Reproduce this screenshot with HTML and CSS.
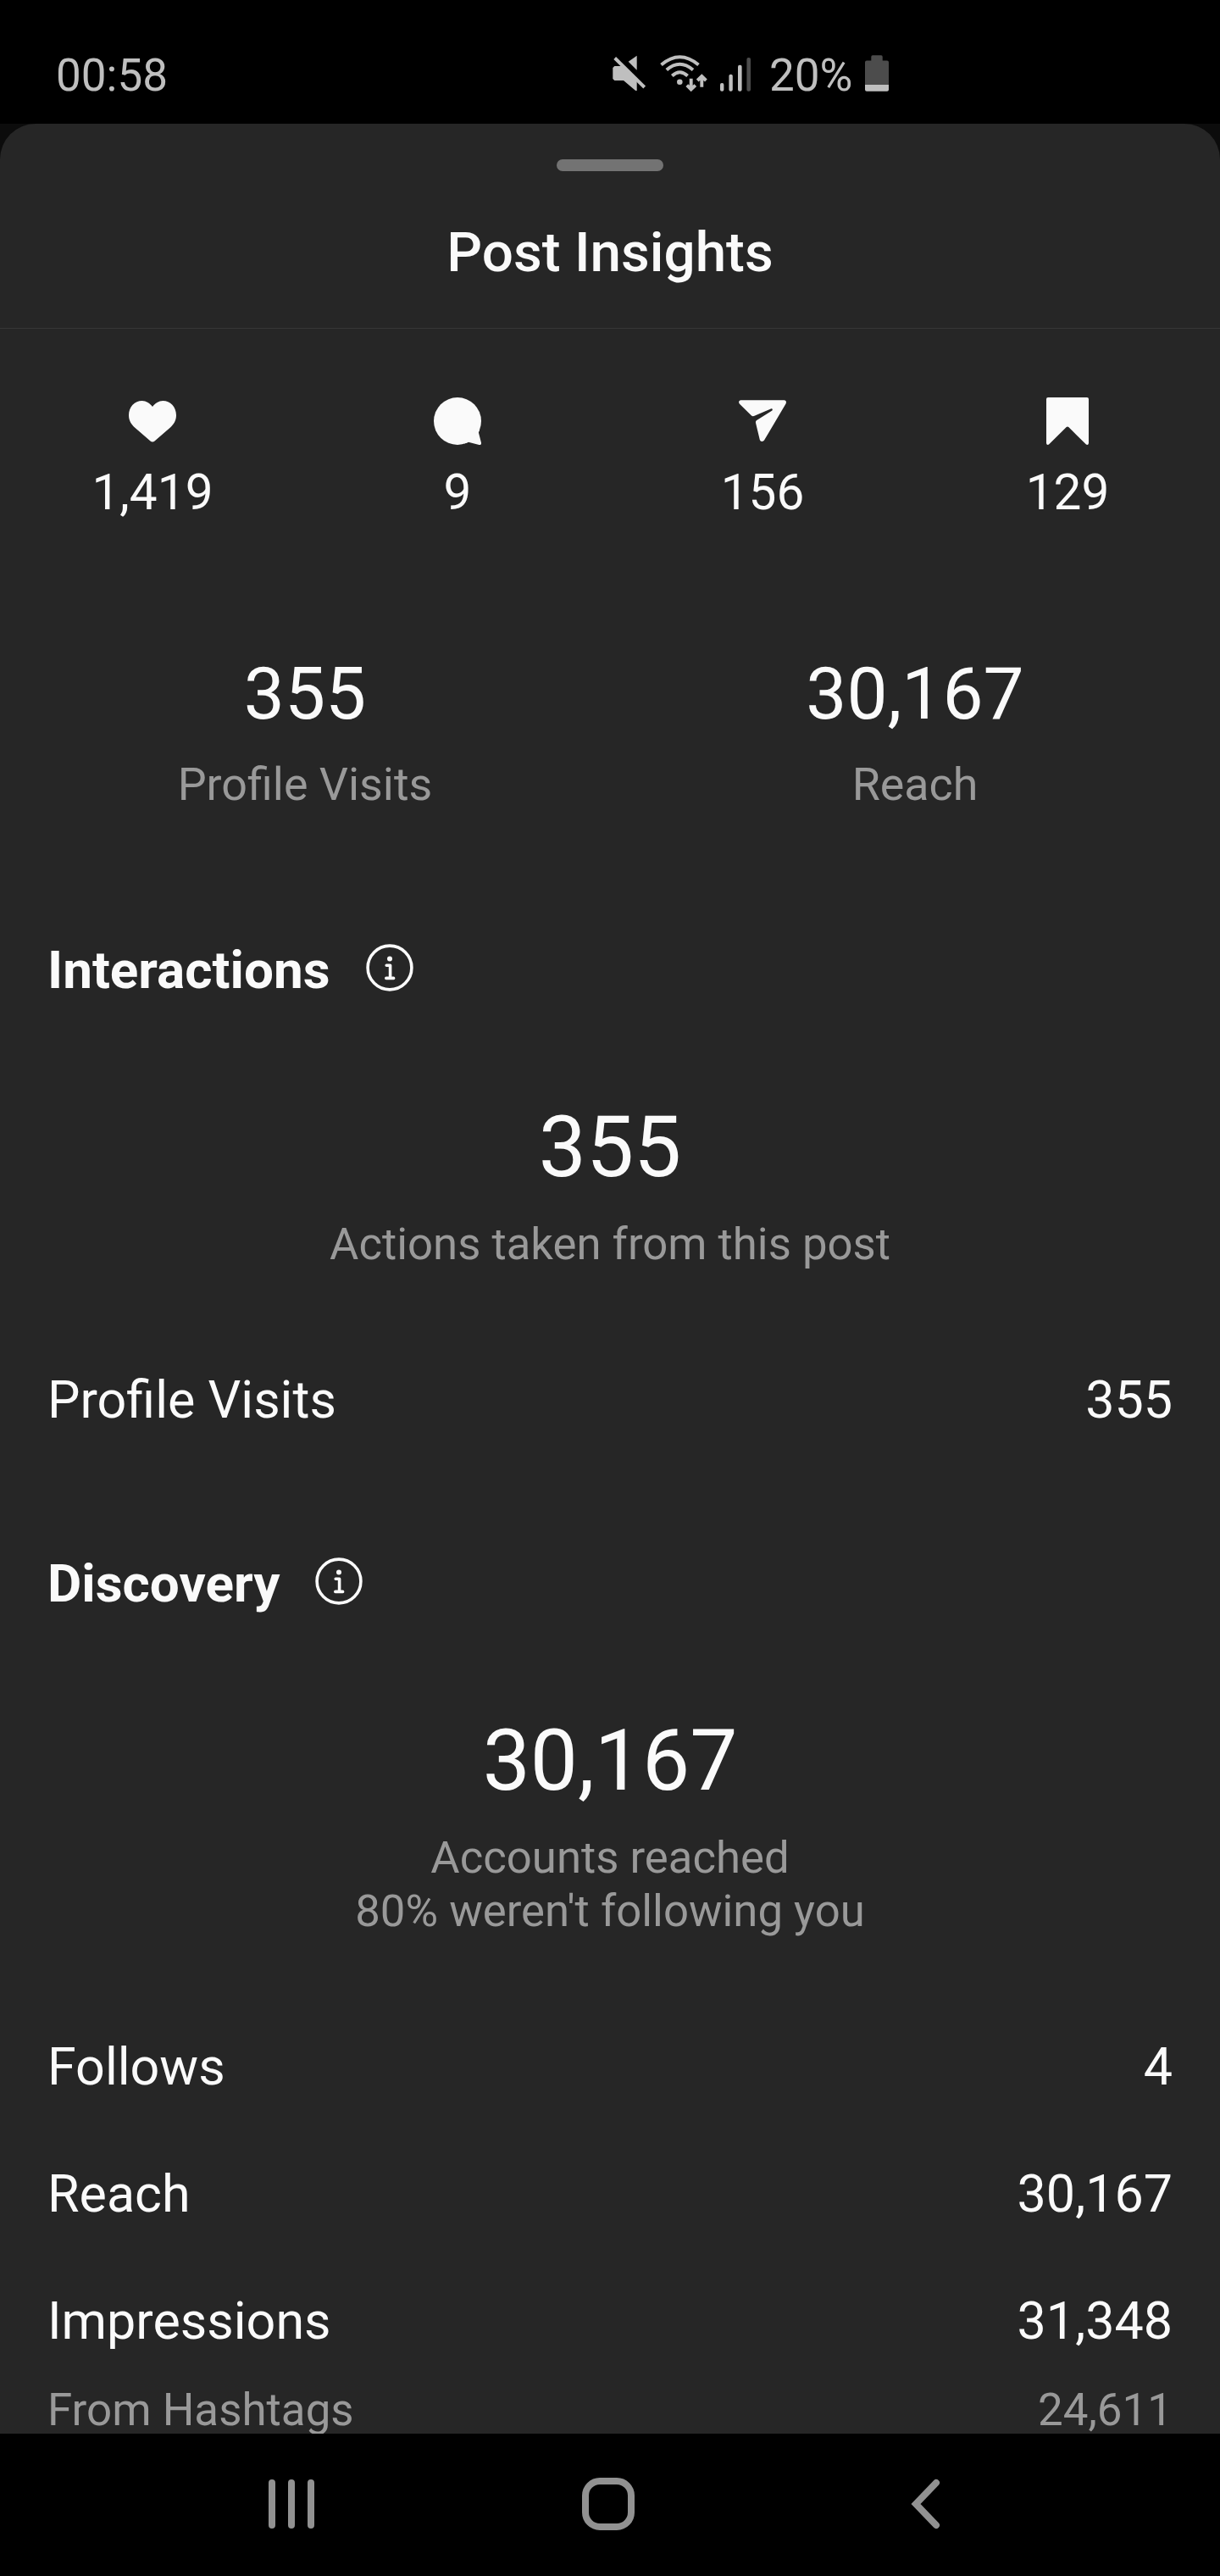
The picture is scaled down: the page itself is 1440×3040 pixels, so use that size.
FILE: index.html
```html
<!DOCTYPE html>
<html lang="en">
<head>
    <meta charset="UTF-8">
    <title>Post Insights</title>
    <link rel="stylesheet" href="styles.css">
</head>
<body>

    <div class="status-bar">
        <span class="time">00:58</span>
        <svg class="mute" width="42" height="44" viewBox="0 0 42 44">
            <path d="M29.7 .7V17.7L19.7 7.7Z"/>
            <path d="M3.3 13H14L29.7 29V42H28.2L14 30H3.3L1.3 28V15Z"/>
            <path class="line" d="M3.7 3.5L38.7 38"/>
        </svg>
        <svg class="wifi" width="58" height="46" viewBox="0 0 58 46">
            <path class="line" d="M2.5 12.5Q24.3 -6 46.5 12.5M8.8 18.5Q24.3 5 40 18.5M15.3 25.5Q24.3 17 33.6 25.5"/>
            <circle cx="24.3" cy="32.7" r="3.3"/>
            <path class="line" d="M37.7 28.7V41M32.8 36.6L37.7 41.5L42.8 36.6M50.3 38.7V26M45.2 31L50.3 26L55.4 31"/>
        </svg>
        <svg class="signal" width="40" height="44" viewBox="0 0 40 44">
            <rect x="2" y="32" width="4.4" height="9.7" rx="2"/>
            <rect x="12.4" y="21.7" width="4.4" height="20" rx="2"/>
            <rect x="23" y="10.7" width="4.6" height="31" rx="2"/>
            <rect class="dim" x="33.4" y="2" width="4.6" height="39.7" rx="2"/>
        </svg>
        <span class="percent">20%</span>
        <svg class="battery" width="28" height="44" viewBox="0 0 28 44">
            <path class="dim" d="M7.3 2Q7.3 .3 9 .3H19Q20.7 .3 20.7 2V6.5H26Q28 6.5 28 8.5V36H0V8.5Q0 6.5 2 6.5H7.3Z"/>
            <path d="M0 35H28V40.7Q28 42.7 26 42.7H2Q0 42.7 0 40.7Z"/>
        </svg>
    </div>

    <div class="backdrop">
        <div class="sheet">
            <div class="sheet-header">
                <div class="handle"></div>
                <h1>Post Insights</h1>
            </div>

            <div class="counts">
                <div class="count">
                    <svg width="56" height="56" viewBox="0 0 56 56"><path d="M28 11C25 7 20.5 4 15.8 4C7 4 0 11 0 21C0 28 3.5 32.3 7 35.5L25.5 51.5Q28 53.5 30.5 51.5L49 35.5C52.5 32.3 56 28 56 21C56 11 49 4 40.2 4C35.5 4 31 7 28 11Z"/></svg>
                    <span>1,419</span>
                </div>
                <div class="count">
                    <svg width="56" height="56" viewBox="0 0 56 56"><circle cx="28" cy="28" r="28"/><path d="M54 38L52.9 41.5L56 53.5Q56.3 56.5 53.5 56L41 52.8L36 54.5L30 40Z"/></svg>
                    <span>9</span>
                </div>
                <div class="count">
                    <svg width="56" height="56" viewBox="0 0 56 56"><path d="M2.5 3.3H53.5C56 3.3 56.5 5.5 55.5 7.5L30.2 50.3C28.8 52.6 25.5 52.6 24.8 50L20 30C19.8 28.6 20.2 27.6 21.5 26.8L39 15.8C40.6 14.6 39.6 12.8 37.8 13.4L18.5 21.8C17 22.5 16 22.3 15 21.5L1 7.8C-.6 6 0 3.3 2.5 3.3Z"/></svg>
                    <span>156</span>
                </div>
                <div class="count">
                    <svg width="56" height="56" viewBox="0 0 56 56"><path d="M5 0H51Q53 0 53 2V54Q52.6 56.6 50 55.6L29.3 35Q28 33.8 26.7 35L6 55.6Q3.4 56.6 3 54V2Q3 0 5 0Z"/></svg>
                    <span>129</span>
                </div>
            </div>

            <div class="stats">
                <div>
                    <div class="stat-value">355</div>
                    <div class="label">Profile Visits</div>
                </div>
                <div>
                    <div class="stat-value">30,167</div>
                    <div class="label">Reach</div>
                </div>
            </div>

            <div class="section interactions">
                <h2>Interactions
                    <svg class="info" width="56" height="56" viewBox="0 0 56 56"><circle cx="28" cy="28" r="25.9"/><path d="M24.2 25.2H28.6V40.4M23.8 40.4H32.6"/><circle class="dot" cx="28" cy="17.4" r="3"/></svg>
                </h2>
                <div class="hero">355</div>
                <div class="label">Actions taken from this post</div>
                <div class="rows">
                    <div class="row"><span>Profile Visits</span><span>355</span></div>
                </div>
            </div>

            <div class="section discovery">
                <h2>Discovery
                    <svg class="info" width="56" height="56" viewBox="0 0 56 56"><circle cx="28" cy="28" r="25.9"/><path d="M24.2 25.2H28.6V40.4M23.8 40.4H32.6"/><circle class="dot" cx="28" cy="17.4" r="3"/></svg>
                </h2>
                <div class="hero">30,167</div>
                <div class="label">Accounts reached<br>80% weren't following you</div>
                <div class="rows">
                    <div class="row"><span>Follows</span><span>4</span></div>
                    <div class="row"><span>Reach</span><span>30,167</span></div>
                    <div class="row"><span>Impressions</span><span>31,348</span></div>
                </div>
                <div class="row sub"><span>From Hashtags</span><span>24,611</span></div>
            </div>
        </div>
    </div>

    <div class="nav-bar">
        <svg width="62" height="62" viewBox="0 0 62 62"><path d="M8 6V56M31 6V56M54 6V56"/></svg>
        <svg width="62" height="62" viewBox="0 0 62 62"><rect x="4" y="4" width="54" height="54" rx="17"/></svg>
        <svg width="62" height="62" viewBox="0 0 62 62"><path d="M44 6L20 31L44 56"/></svg>
    </div>

</body>
</html>
```

FILE: styles.css
```css
* {
    box-sizing: border-box;
}

body {
    margin: 0;
    width: 1440px;
    height: 3040px;
    display: flex;
    flex-direction: column;
    overflow: hidden;
    background-color: #000;
    color: #fafafa;
    font-family: Roboto, sans-serif;
}

svg {
    display: block;
    flex: none;
}

/* Status bar */
.status-bar {
    display: flex;
    align-items: flex-start;
    height: 146px;
    padding: 58px 0 0 66px;
    font-size: 53px;
    line-height: 62px;
    color: #bfbfbf;
    fill: #bfbfbf;
}

.time {
    width: 656px;
}

.mute {
    margin-top: 7px;
}

.wifi {
    margin: 6px 0 0 14px;
}

.signal {
    margin: 8px 0 0 12px;
}

.line {
    fill: none;
    stroke: #bfbfbf;
    stroke-width: 3.9;
}

.dim {
    fill: #4c4c4c;
}

.percent {
    width: 113px;
    margin-left: 20px;
}

.battery {
    margin-top: 7px;
}

/* Bottom sheet */
.backdrop {
    height: 2726px;
    background-color: #0c0c0c;
}

.sheet {
    height: 100%;
    overflow: hidden;
    background-color: #262626;
    border-radius: 42px 42px 0 0;
}

.sheet-header {
    height: 242px;
    padding-top: 42px;
    border-bottom: 1px solid #363636;
}

.handle {
    width: 126px;
    height: 14px;
    margin: 0 auto;
    border-radius: 7px;
    background-color: #737373;
}

h1 {
    margin: 58px 0 0;
    font-size: 65.6px;
    font-weight: 500;
    line-height: 76px;
    text-align: center;
}

.counts {
    display: grid;
    grid-template-columns: repeat(4, 1fr);
    padding-top: 81px;
}

.count {
    display: flex;
    flex-direction: column;
    align-items: center;
    gap: 21px;
    font-size: 58.5px;
    line-height: 70px;
    fill: #fafafa;
}

.stats {
    display: grid;
    grid-template-columns: 1fr 1fr;
    margin-top: 153px;
    text-align: center;
}

.stat-value {
    margin-bottom: 25px;
    font-size: 85.6px;
    line-height: 100px;
}

.label {
    font-size: 53.8px;
    line-height: 63px;
    color: #999;
    text-align: center;
}

/* Sections */
.section {
    padding: 0 56px;
}

.section .label {
    font-size: 52.7px;
}

.interactions {
    margin-top: 152px;
}

.discovery {
    margin-top: 145px;
}

h2 {
    display: flex;
    gap: 42px;
    margin: 0;
    font-size: 62px;
    font-weight: 700;
    line-height: 72px;
}

.info {
    margin-top: 5px;
    fill: none;
    stroke: #fafafa;
    stroke-width: 3.6;
    stroke-linecap: round;
    stroke-linejoin: round;
}

.info .dot {
    fill: #fafafa;
    stroke: none;
}

.hero {
    margin: 115px 0 25px;
    font-size: 100px;
    line-height: 116px;
    text-align: center;
}

.rows {
    display: flex;
    flex-direction: column;
    gap: 78px;
    margin-top: 116px;
}

.row {
    display: flex;
    justify-content: space-between;
    font-size: 61px;
    line-height: 72px;
}

.sub {
    margin-top: 38px;
    font-size: 52.9px;
    line-height: 63px;
    color: #999;
}

/* Navigation bar */
.nav-bar {
    display: flex;
    justify-content: center;
    gap: 312px;
    height: 168px;
    padding: 52px 4px 0 0;
    fill: none;
    stroke: #919191;
    stroke-width: 8;
    stroke-linecap: round;
}
```
